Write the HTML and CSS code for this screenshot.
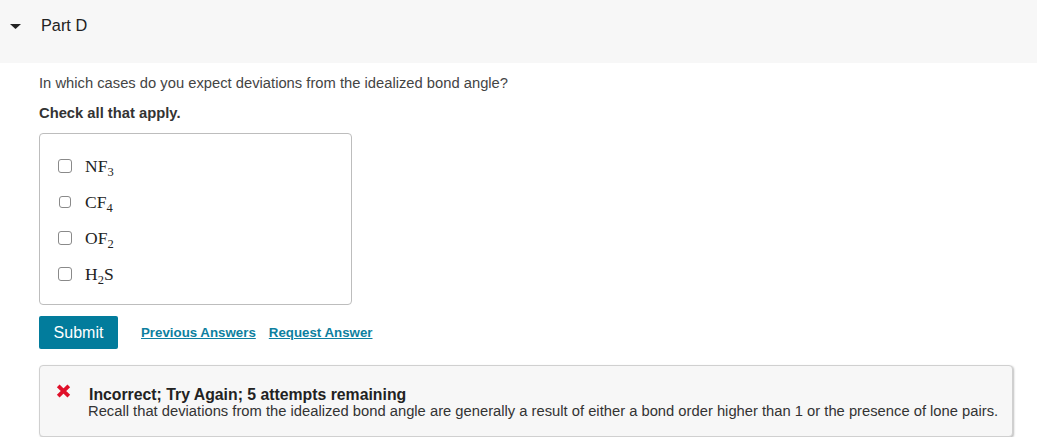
FILE: index.html
```html
<!DOCTYPE html>
<html>
<head>
<meta charset="utf-8">
<link rel="stylesheet" href="styles.css">
</head>
<body>
<div class="part-header">
  <svg class="caret" width="11" height="5" viewBox="0 0 11 5"><path d="M0 0H11L5.5 5Z" fill="#222"/></svg>
  <span class="part-title">Part D</span>
</div>
<div class="content">
  <p class="question">In which cases do you expect deviations from the idealized bond angle?</p>
  <p class="instruct">Check all that apply.</p>
  <div class="choices">
    <label class="choice"><span class="box"></span><span class="chem">NF<sub>3</sub></span></label>
    <label class="choice"><span class="box small"></span><span class="chem">CF<sub>4</sub></span></label>
    <label class="choice"><span class="box"></span><span class="chem">OF<sub>2</sub></span></label>
    <label class="choice"><span class="box"></span><span class="chem">H<sub>2</sub>S</span></label>
  </div>
  <div class="actions">
    <button class="submit">Submit</button>
    <a class="link" href="#">Previous Answers</a>
    <a class="link" href="#">Request Answer</a>
  </div>
  <div class="feedback">
    <svg class="xicon" width="15" height="14" viewBox="0 0 15 14"><path d="M2.2 1.8L12.8 12.2M12.8 1.8L2.2 12.2" stroke="#e0102a" stroke-width="3.8" stroke-linecap="butt"/></svg>
    <div class="fb-text">
      <div class="fb-title">Incorrect; Try Again; 5 attempts remaining</div>
      <div class="fb-body">Recall that deviations from the idealized bond angle are generally a result of either a bond order higher than 1 or the presence of lone pairs.</div>
    </div>
  </div>
</div>
</body>
</html>
```

FILE: styles.css
```css
html, body { margin: 0; padding: 0; background: #fff; }
body { font-family: "Liberation Sans", Arial, sans-serif; color: #333; }

.part-header {
  background: #f7f7f7;
  height: 63px;
  display: flex;
  align-items: flex-start;
  padding-top: 16px;
  box-sizing: border-box;
}
.caret { margin: 8px 0 0 10px; }
.part-title { margin-left: 20px; font-size: 16.3px; color: #222; line-height: 18px; }

.content { padding-left: 39px; }
.question { margin: 12px 0 0; font-size: 14.75px; color: #444; line-height: 17px; }
.instruct { margin: 13px 0 0; font-size: 14.75px; font-weight: bold; color: #333; line-height: 17px; }

.choices {
  margin-top: 11px;
  width: 313px;
  height: 172px;
  border: 1px solid #bdbdbd;
  border-radius: 4px;
  box-sizing: border-box;
  padding-top: 14px;
  display: flex;
  flex-direction: column;
}
.choice { display: flex; align-items: center; height: 36px; padding-left: 18px; }
.box {
  width: 12px; height: 12px;
  border: 1px solid #8a8a8a;
  border-radius: 3px;
  margin-right: 13px;
  background: #fff;
}
.box.small { width: 10px; height: 10px; margin-left: 1px; margin-right: 14px; }
.chem { font-family: "Liberation Serif", "DejaVu Serif", serif; font-size: 17.5px; color: #222; }
.chem sub { font-size: 12.5px; vertical-align: -4px; line-height: 0; }

.actions { display: flex; align-items: center; margin-top: 11px; }
.submit {
  background: #027c9c;
  color: #fff;
  border: none;
  border-radius: 2px;
  width: 79px; height: 33px;
  font-family: "Liberation Sans", Arial, sans-serif;
  font-size: 16px;
  padding: 0;
}
.link {
  color: #0d7fa0;
  font-weight: bold;
  font-size: 13.3px;
  text-decoration: underline;
  margin-left: 23px;
}
.link + .link { margin-left: 13px; }

.feedback {
  margin-top: 16px;
  width: 974px;
  height: 72px;
  background: #f7f7f7;
  border: 1px solid #d0d0d0;
  border-radius: 4px;
  box-shadow: 1px 1px 2px rgba(0,0,0,0.25);
  display: flex;
  align-items: flex-start;
  box-sizing: border-box;
  padding: 18px 0 0 16px;
}
.xicon { margin-top: 0; }
.fb-text { margin-left: 18px; }
.fb-title { font-size: 15.8px; font-weight: bold; color: #222; line-height: 17px; margin-top: 2px; }
.fb-body { font-size: 14.75px; color: #333; line-height: 16px; margin-left: -1px; }
```
